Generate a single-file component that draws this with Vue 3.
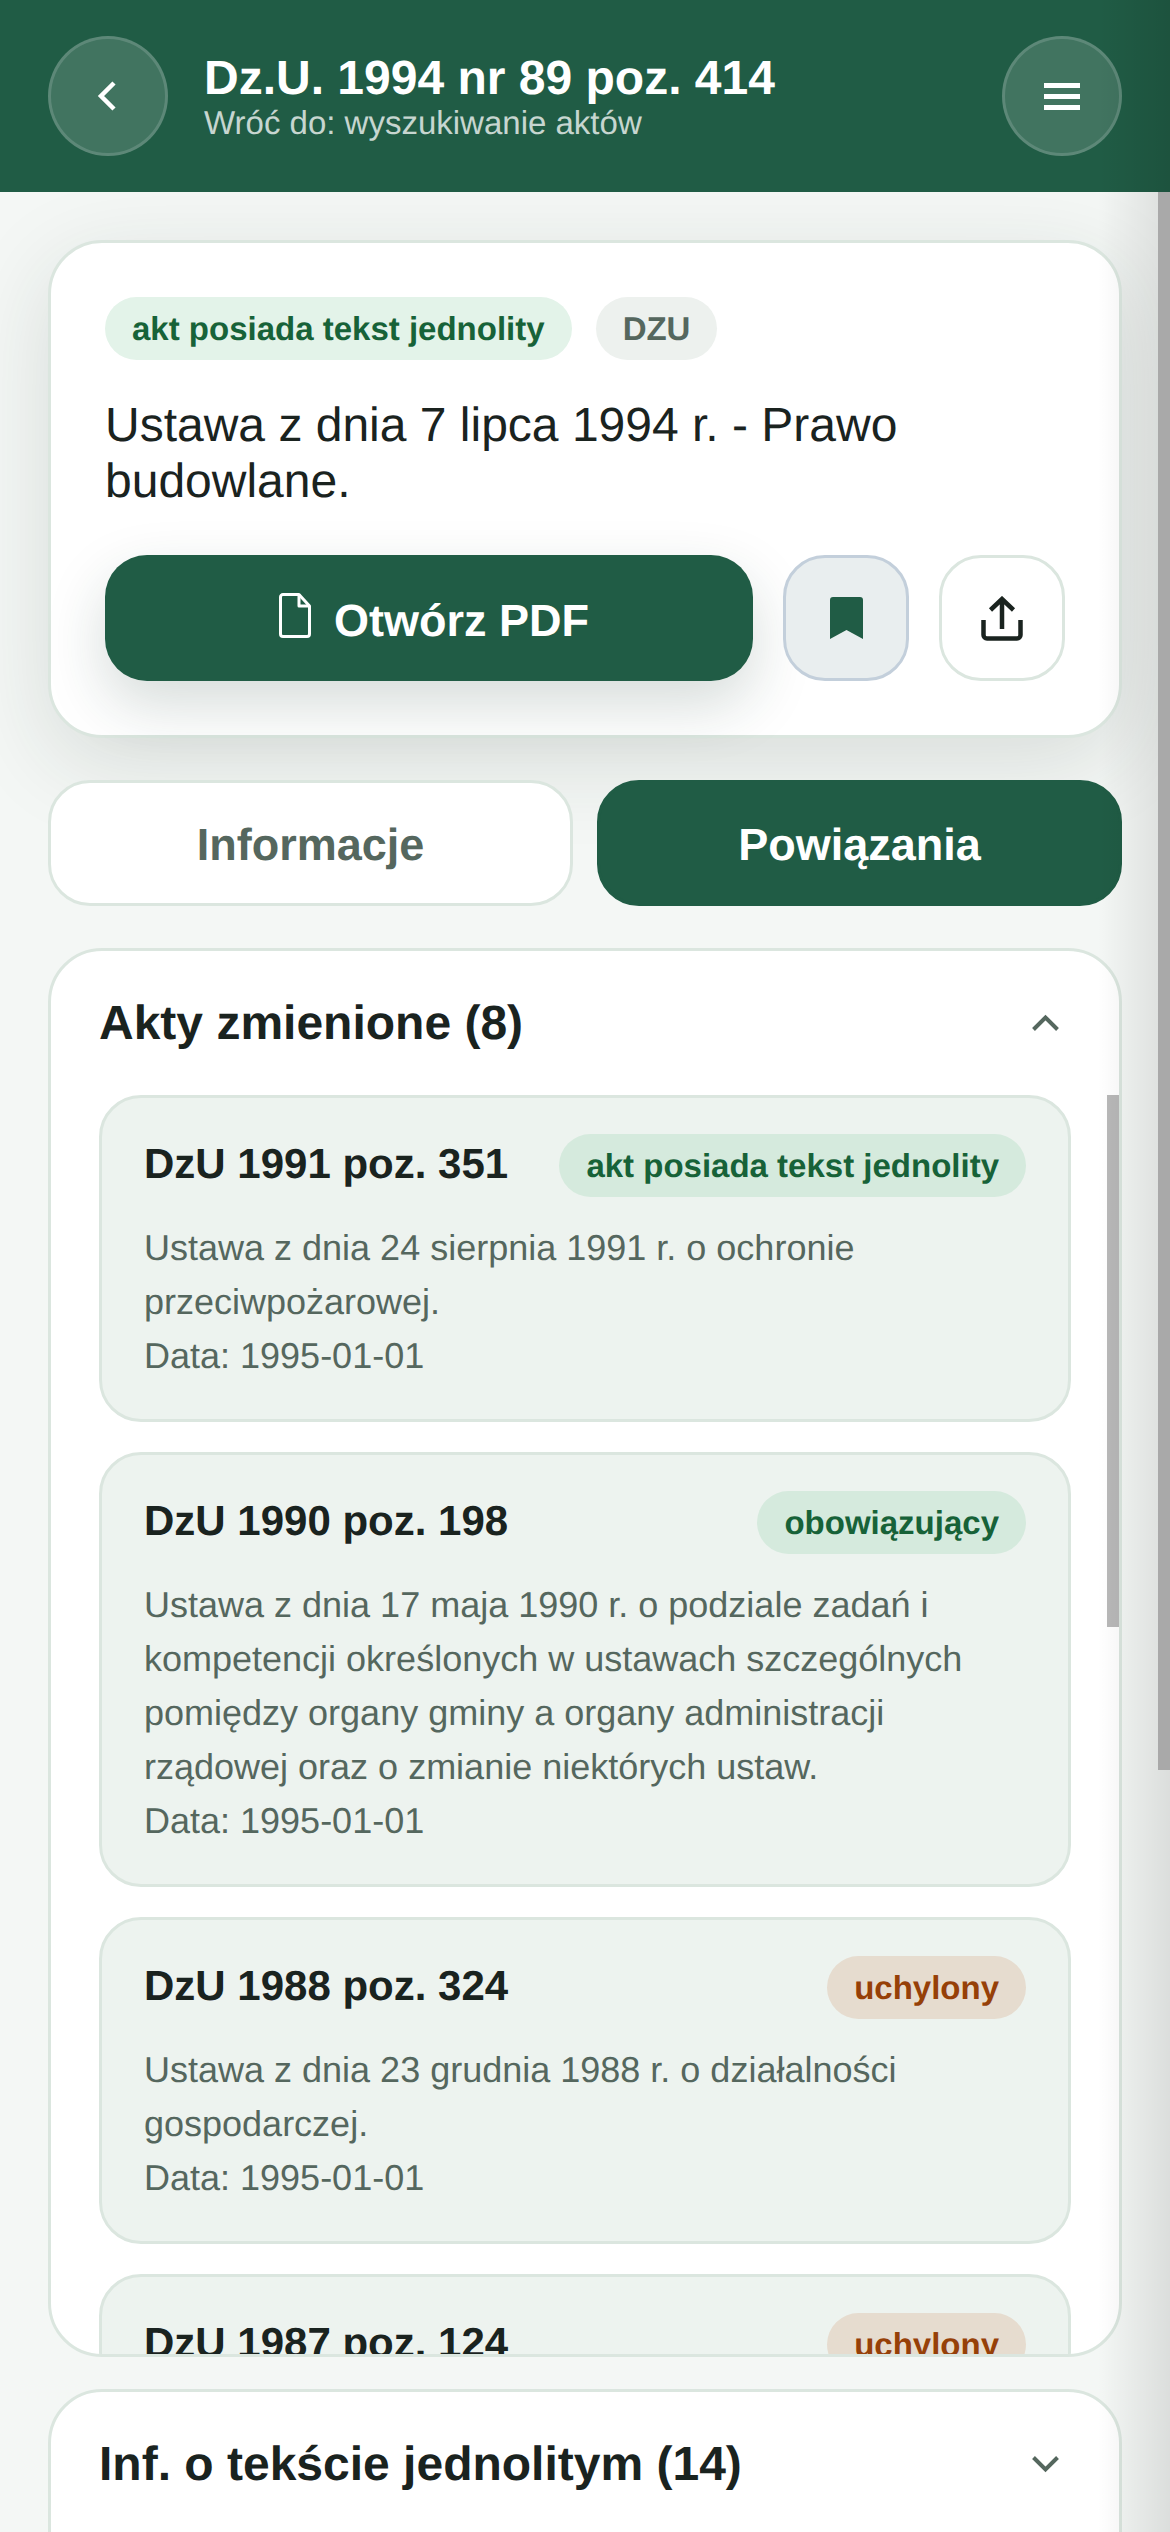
<template>
  <div class="page">
    <header class="topbar">
      <button class="round-btn" aria-label="Wróć">
        <svg width="36" height="36" viewBox="0 0 36 36" fill="none" stroke="#fff" stroke-width="4.5">
          <path d="M24 5 L11 18 L24 31" />
        </svg>
      </button>
      <div class="topbar-text">
        <div class="topbar-title">Dz.U. 1994 nr 89 poz. 414</div>
        <div class="topbar-sub">Wróć do: wyszukiwanie aktów</div>
      </div>
      <button class="round-btn" aria-label="Menu">
        <span class="burger"><i></i><i></i><i></i></span>
      </button>
    </header>

    <main class="content">
      <section class="card summary">
        <div class="pills">
          <span class="pill pill-soft">akt posiada tekst jednolity</span>
          <span class="pill pill-grey">DZU</span>
        </div>
        <h1 class="act-title">Ustawa z dnia 7 lipca 1994 r. - Prawo budowlane.</h1>
        <div class="actions">
          <button class="pdf-btn">
            <svg class="pdf-icon" width="32" height="45" viewBox="0 0 32 45" fill="none" stroke="#fff" stroke-width="3" stroke-linejoin="round">
              <path d="M4 1.5 H20 L30.5 13 V41 A2.5 2.5 0 0 1 28 43.5 H4 A2.5 2.5 0 0 1 1.5 41 V4 A2.5 2.5 0 0 1 4 1.5 Z" />
              <path d="M20 1.5 V13 H30.5" />
            </svg>
            Otwórz PDF
          </button>
          <button class="square-btn saved" aria-label="Zapisz">
            <svg width="33" height="42" viewBox="0 0 33 42" fill="#205c45">
              <path d="M3 0 H30 A3 3 0 0 1 33 3 V42 L16.5 33 L0 42 V3 A3 3 0 0 1 3 0 Z" />
            </svg>
          </button>
          <button class="square-btn" aria-label="Udostępnij">
            <svg width="42" height="45" viewBox="0 0 42 45" fill="none" stroke="#1a231f" stroke-width="4.5">
              <path d="M21 33 V3 M9.5 14 L21 3 L32.5 14" />
              <path d="M2.5 24 V39 A3.5 3.5 0 0 0 6 42.5 H36 A3.5 3.5 0 0 0 39.5 39 V24" />
            </svg>
          </button>
        </div>
      </section>

      <nav class="tabs">
        <button class="tab">Informacje</button>
        <button class="tab active">Powiązania</button>
      </nav>

      <section class="card related">
        <div class="section-head">
          <h2>Akty zmienione (8)</h2>
          <svg width="27" height="18" viewBox="0 0 27 18" fill="none" stroke="#55675e" stroke-width="4">
            <path d="M1.5 15.5 L13.5 3.5 L25.5 15.5" />
          </svg>
        </div>
        <div class="acts">
          <article v-for="act in acts" :key="act.ref" class="act">
            <div class="act-head">
              <span class="act-ref">{{ act.ref }}</span>
              <span class="pill" :class="act.status === 'uchylony' ? 'pill-repealed' : 'pill-green'">{{ act.status }}</span>
            </div>
            <p v-if="act.desc" class="act-desc">{{ act.desc }}</p>
            <p v-if="act.date" class="act-desc">{{ act.date }}</p>
          </article>
        </div>
        <div class="inner-thumb"></div>
      </section>

      <section class="card collapsed">
        <div class="section-head">
          <h2>Inf. o tekście jednolitym (14)</h2>
          <svg width="27" height="18" viewBox="0 0 27 18" fill="none" stroke="#55675e" stroke-width="4">
            <path d="M1.5 2.5 L13.5 14.5 L25.5 2.5" />
          </svg>
        </div>
      </section>
    </main>

    <div class="edge-shade"></div>
    <div class="page-thumb"></div>
  </div>
</template>

<script setup>
const acts = [
  {
    ref: 'DzU 1991 poz. 351',
    status: 'akt posiada tekst jednolity',
    desc: 'Ustawa z dnia 24 sierpnia 1991 r. o ochronie przeciwpożarowej.',
    date: 'Data: 1995-01-01'
  },
  {
    ref: 'DzU 1990 poz. 198',
    status: 'obowiązujący',
    desc: 'Ustawa z dnia 17 maja 1990 r. o podziale zadań i kompetencji określonych w ustawach szczególnych pomiędzy organy gminy a organy administracji rządowej oraz o zmianie niektórych ustaw.',
    date: 'Data: 1995-01-01'
  },
  {
    ref: 'DzU 1988 poz. 324',
    status: 'uchylony',
    desc: 'Ustawa z dnia 23 grudnia 1988 r. o działalności gospodarczej.',
    date: 'Data: 1995-01-01'
  },
  {
    ref: 'DzU 1987 poz. 124',
    status: 'uchylony',
    desc: '',
    date: ''
  }
]
</script>

<style>
html,
body {
  margin: 0;
  background: #f4f7f5;
}
</style>

<style scoped>
.page {
  position: relative;
  width: 1170px;
  height: 2532px;
  overflow: hidden;
  font-family: "Liberation Sans", Arial, sans-serif;
  color: #1a231f;
  background: #f4f7f5;
  text-rendering: geometricPrecision;
}

button {
  font-family: inherit;
  text-rendering: inherit;
  cursor: pointer;
}

.topbar {
  position: relative;
  z-index: 1;
  display: flex;
  align-items: center;
  gap: 36px;
  height: 192px;
  padding: 0 48px;
  box-sizing: border-box;
  background: #205c45;
}

.round-btn {
  display: flex;
  align-items: center;
  justify-content: center;
  flex: none;
  width: 120px;
  height: 120px;
  padding: 0;
  border: 3px solid rgba(255, 255, 255, 0.15);
  border-radius: 50%;
  background: rgba(255, 255, 255, 0.15);
}

.burger {
  display: flex;
  flex-direction: column;
  gap: 6px;
  width: 36px;
}

.burger i {
  display: block;
  height: 5px;
  background: #fff;
}

.topbar-text {
  flex: 1;
  min-width: 0;
}

.topbar-title {
  margin-bottom: -2px;
  font-size: 48px;
  line-height: 56px;
  font-weight: 700;
  color: #fff;
}

.topbar-sub {
  font-size: 33px;
  line-height: 36px;
  color: rgba(255, 255, 255, 0.75);
}

.content {
  display: flex;
  flex-direction: column;
  gap: 42px;
  padding: 48px 48px 0;
}

.card {
  border: 3px solid #dbe6df;
  border-radius: 54px;
  background: #fff;
  box-sizing: border-box;
}

.summary {
  padding: 54px;
  box-shadow: 0 24px 90px rgba(30, 50, 40, 0.13);
}

.pills {
  display: flex;
  gap: 24px;
}

.pill {
  display: inline-flex;
  align-items: center;
  flex: none;
  height: 63px;
  padding: 0 27px;
  border-radius: 32px;
  font-size: 33px;
  font-weight: 700;
  white-space: nowrap;
}

.pill-soft {
  background: #e3f3e9;
  color: #176238;
}

.pill-green {
  background: #d5eadd;
  color: #176238;
}

.pill-grey {
  background: #edf1ee;
  color: #55675e;
}

.pill-repealed {
  background: #e6dccf;
  color: #964008;
}

.act-title {
  margin: 38px 0 0;
  font-size: 48px;
  line-height: 56px;
  font-weight: 400;
}

.actions {
  display: flex;
  gap: 30px;
  margin-top: 45px;
}

.pdf-btn {
  display: flex;
  align-items: center;
  justify-content: center;
  gap: 23px;
  flex: 1;
  height: 126px;
  padding: 6px 0 0 10px;
  border: 0;
  border-radius: 42px;
  background: #205c45;
  color: #fff;
  font-size: 45px;
  font-weight: 700;
  box-shadow: 0 24px 60px rgba(30, 60, 48, 0.18);
}

.pdf-icon {
  margin-top: -12px;
}

.square-btn {
  display: flex;
  align-items: center;
  justify-content: center;
  flex: none;
  width: 126px;
  height: 126px;
  padding: 0;
  border: 3px solid #dbe6df;
  border-radius: 42px;
  background: #fff;
}

.square-btn.saved {
  border-color: #c3cfdb;
  background: #e9eeef;
}

.tabs {
  display: grid;
  grid-template-columns: 1fr 1fr;
  gap: 24px;
}

.tab {
  height: 126px;
  padding: 3px 0 0;
  border: 3px solid #dbe6df;
  border-radius: 42px;
  background: #fff;
  color: #55675e;
  font-size: 45px;
  font-weight: 700;
}

.tab.active {
  border-color: #205c45;
  background: #205c45;
  color: #fff;
}

.related {
  position: relative;
  height: 1409px;
  overflow: hidden;
  padding: 0 48px;
}

.section-head {
  display: flex;
  align-items: center;
  justify-content: space-between;
  height: 144px;
  padding-right: 12px;
}

.section-head h2 {
  margin: 0;
  font-size: 48px;
  font-weight: 700;
}

.acts {
  display: flex;
  flex-direction: column;
  gap: 30px;
}

.act {
  flex: none;
  padding: 36px 42px;
  border: 3px solid #dbe6df;
  border-radius: 42px;
  background: #edf3ef;
}

.act-head {
  display: flex;
  align-items: center;
  justify-content: space-between;
  gap: 24px;
  margin-bottom: 24px;
}

.act-ref {
  margin-top: -3px;
  font-size: 42px;
  font-weight: 700;
}

.act-desc {
  margin: 0;
  font-size: 36px;
  line-height: 54px;
  color: #55675e;
}

.inner-thumb {
  position: absolute;
  top: 144px;
  right: 0;
  width: 12px;
  height: 532px;
  background: #b8b8b8;
}

.collapsed {
  margin-top: -10px;
  height: 240px;
}

.collapsed .section-head {
  padding: 0 60px 0 48px;
  height: 144px;
}

.edge-shade {
  position: absolute;
  z-index: 2;
  top: 0;
  right: 0;
  bottom: 0;
  width: 72px;
  background: linear-gradient(90deg, rgba(0, 0, 0, 0), rgba(0, 0, 0, 0.1));
  pointer-events: none;
}

.page-thumb {
  position: absolute;
  z-index: 3;
  top: 192px;
  right: 0;
  width: 12px;
  height: 1578px;
  background: #a9a9a9;
}
</style>
